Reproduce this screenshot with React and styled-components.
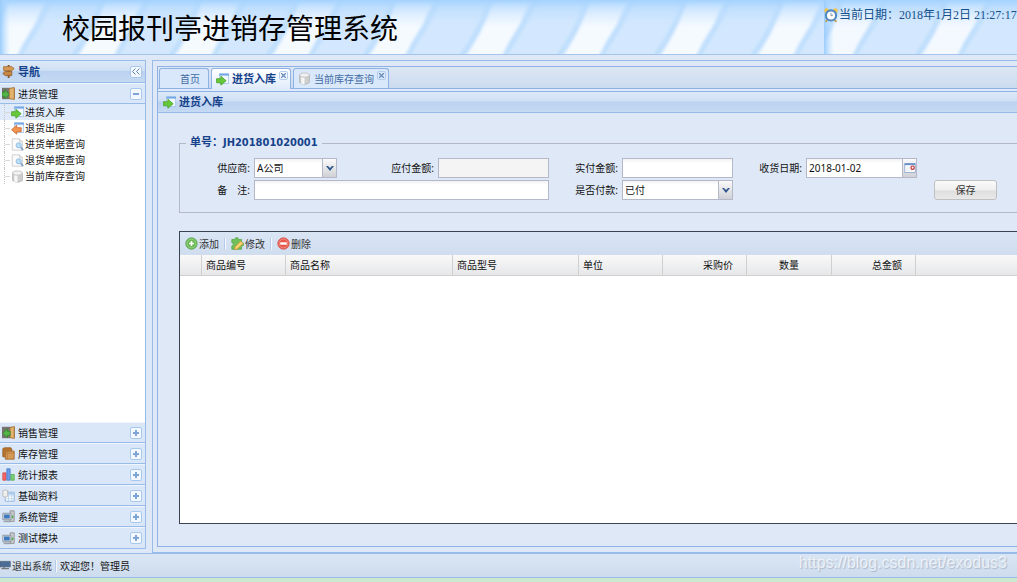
import { useState } from 'react';
import styled, { createGlobalStyle, css } from 'styled-components';

const menus = [
  { name: '销售管理', icon: 'doorOut' },
  { name: '库存管理', icon: 'box' },
  { name: '统计报表', icon: 'chart' },
  { name: '基础资料', icon: 'data' },
  { name: '系统管理', icon: 'computer' },
  { name: '测试模块', icon: 'computer' },
];

const treeItems = [
  { name: '进货入库', icon: 'goIn' },
  { name: '退货出库', icon: 'goOut' },
  { name: '进货单据查询', icon: 'search' },
  { name: '退货单据查询', icon: 'search' },
  { name: '当前库存查询', icon: 'db' },
];

const columns = [
  { name: '', width: 22 },
  { name: '商品编号', width: 84 },
  { name: '商品名称', width: 167 },
  { name: '商品型号', width: 126 },
  { name: '单位', width: 84 },
  { name: '采购价', width: 84, align: 'right' },
  { name: '数量', width: 85, align: 'center' },
  { name: '总金额', width: 84, align: 'right' },
];

const drawings = {
  sign: (
    <>
      <path d="M7 0h2.4v16H7z" fill="#8a5a2c" />
      <path d="M2 2h10l3 2.5L12 7H2z" fill="#d79a55" stroke="#a06a30" />
      <path d="M12 8H4l-3 2.5L4 13h8z" fill="#c88643" stroke="#935c27" />
    </>
  ),
  doorIn: (
    <>
      <path d="M0 1h16v14H0z" fill="#77746d" />
      <path d="M9 2l6-1.5v15L9 14z" fill="#e3b26c" stroke="#b07a38" />
      <path d="M0 6.5h3.5V3.5L9 9l-5.5 5.5v-3H0z" fill="#55b548" stroke="#2f8a2a" />
    </>
  ),
  doorOut: (
    <>
      <path d="M0 1h16v14H0z" fill="#77746d" />
      <path d="M10 2l5-1.5v15L10 14z" fill="#e3b26c" stroke="#b07a38" />
      <path d="M10 6.5H6.5V3.5L1 9l5.5 5.5v-3H10z" fill="#55b548" stroke="#2f8a2a" />
    </>
  ),
  box: (
    <>
      <path d="M1 2l2-1h8l1 2v9H1z" fill="#b9752f" stroke="#91591f" />
      <path d="M4 5h11v10H4z" fill="#d59a55" stroke="#a1662a" />
      <path d="M6.5 5v10M4 7.5h11" stroke="#b87a3a" />
    </>
  ),
  chart: (
    <>
      <path d="M1 6h4v9H1z" fill="#f36868" stroke="#d84848" />
      <path d="M6 1h4v14H6z" fill="#6c9de9" stroke="#4278cb" />
      <path d="M11 8h4v7h-4z" fill="#7ed078" stroke="#52ac52" />
    </>
  ),
  data: (
    <>
      <path d="M4 4h11v11H4z" fill="#fff" stroke="#80a8d5" />
      <path d="M4 6h11" stroke="#a6caf0" strokeWidth="2" />
      <path d="M4 8.5h11M4 12h11M8 6v9M12 6v9" stroke="#b6d2ee" />
      <path d="M1 2q3-2 6 0v7q-3 2-6 0z" fill="#eee" stroke="#b5b5b5" />
    </>
  ),
  computer: (
    <>
      <path d="M10 1h5v13h-5z" fill="#c9cbcd" stroke="#8b8b8b" />
      <path d="M1 4h10v8H1z" fill="#d9dde2" stroke="#838a94" />
      <path d="M2.5 5.5h7v5h-7z" fill="#3f79bd" />
      <path d="M2 14h9" stroke="#9aa0a8" strokeWidth="2" />
      <path d="M12 7h2v3h-2z" fill="#48ad48" />
    </>
  ),
  monitor: (
    <>
      <path d="M0 2h15v8H0z" fill="#4b6d97" stroke="#53606d" />
      <path d="M2 12.5h11M6 10v2" stroke="#777" strokeWidth="2" />
    </>
  ),
  goIn: (
    <>
      <path d="M4.5 1h11v12h-11z" fill="#f2f8ff" stroke="#9fc1ea" />
      <path d="M4 2h12" stroke="#78a9e6" strokeWidth="2.5" />
      <path d="M.7 7H6V4l6.5 5.5L6 15v-3H.7z" fill="#67c93a" stroke="#4aa32a" />
    </>
  ),
  goOut: (
    <>
      <path d="M4.5 1h11v12h-11z" fill="#f2f8ff" stroke="#9fc1ea" />
      <path d="M4 2h12" stroke="#78a9e6" strokeWidth="2.5" />
      <path d="M12.5 7H7V4L.7 9.5 7 15v-3h5.5z" fill="#f29550" stroke="#d0662a" />
    </>
  ),
  search: (
    <>
      <path d="M1.5 1h9L14 4.5V15H1.5z" fill="#fafafa" stroke="#c8c8c8" />
      <path d="M10.5 1v3.5H14" fill="none" stroke="#c8c8c8" />
      <circle cx="9.5" cy="9" r="3.2" fill="#b9dcf7" stroke="#8db8de" />
      <path d="M12 11.5l3 3.5" stroke="#7d9cc4" strokeWidth="2" />
    </>
  ),
  db: (
    <>
      <path d="M2 4v9q6 4 12 0V4z" fill="#cfcfcf" stroke="#b2b2b2" />
      <path d="M4 5v9.5l4 .7V5z" fill="#f7f7f7" />
      <ellipse cx="8" cy="3.8" rx="6" ry="2.6" fill="#f0f0f0" stroke="#bdbdbd" />
    </>
  ),
  add: (
    <>
      <circle cx="8" cy="8" r="7" fill="#67b852" stroke="#5ba34b" />
      <circle cx="8" cy="8" r="5.4" fill="none" stroke="#a5d894" />
      <path d="M8 5v6M5 8h6" stroke="#fff" strokeWidth="2" />
    </>
  ),
  edit: (
    <>
      <path
        d="M1 3h4q0-2.5 2-2.5T9 3h4v4q3 0 3 2t-3 2v4H1v-4q2 0 2-2T1 7z"
        fill="#6fc05a"
        stroke="#5aa64a"
      />
      <path d="M5 12l7-7 3 3-7.5 7-3 .7z" fill="#f7d36b" stroke="#c78f3a" />
    </>
  ),
  remove: (
    <>
      <circle cx="8" cy="8" r="7" fill="#e8564a" stroke="#d4534a" />
      <circle cx="8" cy="8" r="5.4" fill="none" stroke="#f29a90" />
      <path d="M4 8h8" stroke="#fff" strokeWidth="3" />
    </>
  ),
  clock: (
    <>
      <circle cx="3" cy="3" r="2.7" fill="#f4c44c" />
      <circle cx="13" cy="3" r="2.7" fill="#f4c44c" />
      <path d="M4 13l-2 3M12 13l2 3" stroke="#c89b45" strokeWidth="2" />
      <circle cx="8" cy="8.5" r="5.8" fill="#fff" stroke="#5189c0" strokeWidth="2.4" />
      <path d="M8 5.5V9l2.4-1" fill="none" stroke="#7a8794" />
    </>
  ),
  calendar: (
    <>
      <path d="M1 2h14v12H1z" fill="#fff" stroke="#7d9cc9" />
      <path d="M1 3h14" stroke="#6b93cb" strokeWidth="2.5" />
      <path d="M3 8h6M3 11h9" stroke="#c3cddb" strokeDasharray="2 1" />
      <circle cx="11.5" cy="7.5" r="2.2" fill="#fff" stroke="#c62d2d" strokeWidth="1.6" />
    </>
  ),
};

const Icon = ({ name, size = 13 }) => (
  <Svg width={size} height={size} viewBox="0 0 16 16" aria-hidden="true">
    {drawings[name]}
  </Svg>
);

const Stripes = ({ id, period, offset, white }) => (
  <StripesSvg aria-hidden="true">
    <defs>
      <linearGradient id={`${id}-top`} x1="0" y1="0" x2="0" y2="1">
        <stop offset="0" stopColor="#a3d2fe" />
        <stop offset="0.3" stopColor="#b3d9fe" stopOpacity="0.6" />
        <stop offset="1" stopColor="#cfe6ff" stopOpacity="0" />
      </linearGradient>
      <linearGradient id={`${id}-left`}>
        <stop offset="0" stopColor="#9acdfc" />
        <stop offset="1" stopColor="#b8dcff" stopOpacity="0" />
      </linearGradient>
      <filter id={`${id}-soft`}>
        <feGaussianBlur stdDeviation="1.6" />
      </filter>
      <pattern
        id={id}
        x={offset}
        width={period}
        height="56"
        patternUnits="userSpaceOnUse"
      >
        <rect width={period} height="56" fill="#d3e8fe" />
        <g filter={`url(#${id}-soft)`}>
          <path d="M4 58L34 -2H74L42 58z" fill={white} />
          <path d="M-3 58L8 42L16 28L24 10L29 -2H35L27 18L20 33L10 50L4 58z" fill="#c0dffd" />
          <path d="M41 58L49 42L60 24L65 12L73 -2H79L70 18L63 30L53 46L46 58z" fill="#c0dffd" />
        </g>
      </pattern>
    </defs>
    <rect width="100%" height="100%" fill={`url(#${id})`} />
    <rect width="100%" height="28" fill={`url(#${id}-top)`} />
    <rect width="10" height="100%" fill={`url(#${id}-left)`} />
  </StripesSvg>
);

const Arrow = () => (
  <svg width="8" height="6" viewBox="0 0 8 6" aria-hidden="true">
    <path d="M0 1h2l2 2 2-2h2L4 6z" fill="#2f568f" />
  </svg>
);

const App = () => {
  const [supplier, setSupplier] = useState('A公司');
  const [paid, setPaid] = useState('已付');

  return (
    <Page>
      <GlobalStyle />
      <Header>
        <Stripes id="banner" period="97" offset="72" white="#f5faff" />
        <Title>校园报刊亭进销存管理系统</Title>
        <Today>
          <Stripes id="today" period="105" offset="91" white="#f4f9ff" />
          <TodayText>
            <Icon name="clock" size={14} />
            <span>当前日期：2018年1月2日&nbsp;21:27:17</span>
          </TodayText>
        </Today>
      </Header>

      <Main>
        <Sidebar>
          <SideHead>
            <Icon name="sign" />
            <SideTitle>导航</SideTitle>
            <Tool aria-label="收起导航">
              <svg width="8" height="7" viewBox="0 0 8 7">
                <path
                  d="M3.5 .5l-3 3 3 3M7.5 .5l-3 3 3 3"
                  fill="none"
                  stroke="#5d83b8"
                />
              </svg>
            </Tool>
          </SideHead>
          <MenuHead>
            <Icon name="doorIn" />
            <span>进货管理</span>
            <Tool aria-label="折叠">
              <svg width="6" height="6" viewBox="0 0 6 6">
                <path d="M0 3h6" stroke="#7fa5d6" strokeWidth="2" />
              </svg>
            </Tool>
          </MenuHead>
          <Tree>
            {treeItems.map((item, i) => (
              <TreeItem key={item.name} $active={i === 0}>
                <Branch />
                <TreeLink href="#">
                  <Icon name={item.icon} />
                  {item.name}
                </TreeLink>
              </TreeItem>
            ))}
          </Tree>
          {menus.map((menu) => (
            <MenuHead key={menu.name}>
              <Icon name={menu.icon} />
              <span>{menu.name}</span>
              <Tool aria-label="展开">
                <svg width="6" height="6" viewBox="0 0 6 6">
                  <path d="M0 3h6M3 0v6" stroke="#7fa5d6" strokeWidth="2" />
                </svg>
              </Tool>
            </MenuHead>
          ))}
        </Sidebar>

        <Content>
          <TabPanel>
            <Tabs>
              <Tab $home>
                <TabLabel>首页</TabLabel>
              </Tab>
              <Tab $active>
                <Icon name="goIn" />
                <TabLabel $active>进货入库</TabLabel>
                <Close />
              </Tab>
              <Tab>
                <Icon name="db" />
                <TabLabel>当前库存查询</TabLabel>
                <Close />
              </Tab>
            </Tabs>
            <TabLine />
            <PanelHead>
              <Icon name="goIn" />
              进货入库
            </PanelHead>
            <PanelBody>
              <Fieldset>
                <Legend>单号：JH201801020001</Legend>
                <Form>
                  <Field>
                    <Label htmlFor="supplier">供应商:</Label>
                    <Combo $short>
                      <Select
                        id="supplier"
                        value={supplier}
                        onChange={(e) => setSupplier(e.target.value)}
                      >
                        <option>A公司</option>
                      </Select>
                      <Trigger>
                        <Arrow />
                      </Trigger>
                    </Combo>
                  </Field>
                  <Field>
                    <Label htmlFor="payable">应付金额:</Label>
                    <Input id="payable" readOnly />
                  </Field>
                  <Field>
                    <Label htmlFor="payment">实付金额:</Label>
                    <Input id="payment" />
                  </Field>
                  <Field>
                    <Label htmlFor="date">收货日期:</Label>
                    <Combo>
                      <Input id="date" defaultValue="2018-01-02" />
                      <Trigger>
                        <Icon name="calendar" size={12} />
                      </Trigger>
                    </Combo>
                  </Field>
                  <Field $wide>
                    <Label htmlFor="remarks">备&emsp;注:</Label>
                    <Input id="remarks" />
                  </Field>
                  <Field>
                    <Label htmlFor="paid">是否付款:</Label>
                    <Combo>
                      <Select
                        id="paid"
                        value={paid}
                        onChange={(e) => setPaid(e.target.value)}
                      >
                        <option>已付</option>
                        <option>未付</option>
                      </Select>
                      <Trigger>
                        <Arrow />
                      </Trigger>
                    </Combo>
                  </Field>
                  <Save type="button">保存</Save>
                </Form>
              </Fieldset>

              <Grid>
                <Toolbar>
                  <ToolButton>
                    <Icon name="add" />
                    添加
                  </ToolButton>
                  <Separator />
                  <ToolButton>
                    <Icon name="edit" />
                    修改
                  </ToolButton>
                  <Separator />
                  <ToolButton>
                    <Icon name="remove" />
                    删除
                  </ToolButton>
                </Toolbar>
                <Table>
                  <colgroup>
                    {columns.map((column, i) => (
                      <Col key={i} $width={column.width} />
                    ))}
                    <col />
                  </colgroup>
                  <thead>
                    <tr>
                      {columns.map((column, i) => (
                        <Th key={i} $align={column.align}>
                          {column.name}
                        </Th>
                      ))}
                      <Th $last />
                    </tr>
                  </thead>
                </Table>
              </Grid>
            </PanelBody>
          </TabPanel>
        </Content>
      </Main>

      <StatusBar>
        <ToolButton>
          <Icon name="monitor" size={11} />
          退出系统
        </ToolButton>
        <Separator />
        <span>欢迎您！管理员</span>
      </StatusBar>
      <Footer />
      <Watermark>https://blog.csdn.net/exodus3</Watermark>
    </Page>
  );
};

const Close = () => (
  <CloseButton aria-label="关闭">
    <svg width="5" height="5" viewBox="0 0 5 5">
      <path d="M0 0l5 5M5 0L0 5" stroke="#6d8fbd" strokeWidth="1.4" />
    </svg>
  </CloseButton>
);

const GlobalStyle = createGlobalStyle`
  * {
    box-sizing: border-box;
  }
  body {
    margin: 0;
    overflow: hidden;
    background: #dfe8f6;
  }
  body, button, input, select {
    font-family: 'Noto Sans', 'Noto Sans CJK SC', sans-serif;
    font-size: 10px;
    line-height: 14px;
    color: #111;
  }
  button {
    padding: 0;
    border: 0;
    background: none;
  }
`;

const Page = styled.div`
  position: relative;
  display: flex;
  flex-direction: column;
  height: 100vh;
  white-space: nowrap;
`;
const Svg = styled.svg`
  display: block;
  flex: none;
`;
const StripesSvg = styled.svg`
  position: absolute;
  inset: 0;
  width: 100%;
  height: 100%;
`;
const Header = styled.header`
  position: relative;
  display: flex;
  justify-content: space-between;
  flex: none;
  height: 55px;
  border-bottom: 1px solid #a5c4ec;
`;
const Title = styled.h1`
  position: relative;
  margin: 0;
  padding: 8px 0 0 62px;
  font-size: 28px;
  font-weight: 400;
  line-height: 40px;
  color: #000;
`;
const Today = styled.div`
  position: relative;
  width: 193px;
`;
const TodayText = styled.div`
  position: relative;
  display: flex;
  align-items: center;
  gap: 1px;
  padding-top: 6px;
  font-family: 'Liberation Serif', 'Noto Sans CJK SC', serif;
  font-size: 12px;
  line-height: 18px;
  color: #15518a;
`;

const Main = styled.div`
  display: flex;
  flex: 1;
  min-height: 0;
  padding-top: 5px;
`;

const bar = css`
  background: linear-gradient(
    #dce9f8,
    #d0e0f4 45%,
    #bbd2f0 50%,
    #c5d9f3
  );
`;
const Sidebar = styled.nav`
  display: flex;
  flex-direction: column;
  flex: none;
  width: 146px;
  margin-bottom: 4px;
  border: 1px solid #99bbe8;
  border-left: 0;
`;
const SideHead = styled.div`
  display: flex;
  align-items: center;
  flex: none;
  gap: 3px;
  height: 22px;
  padding: 0 3px 0 2px;
  border-bottom: 1px solid #99bbe8;
  ${bar}
`;
const SideTitle = styled.strong`
  font-size: 11px;
  color: #15428b;
`;
const Tool = styled.button`
  display: flex;
  align-items: center;
  justify-content: center;
  width: 12px;
  height: 12px;
  margin-left: auto;
  border: 1px solid #a9c8ee;
  border-radius: 2px;
  background: #f3f8ff;
`;
const MenuHead = styled.div`
  display: flex;
  align-items: center;
  flex: none;
  gap: 3px;
  height: 21px;
  padding: 0 3px 0 2px;
  border-top: 1px solid #eef5fd;
  border-bottom: 1px solid #99bbe8;
  background: #d9e7f8;

  &:last-child {
    border-bottom: 0;
  }
`;
const Tree = styled.ul`
  flex: 1;
  min-height: 0;
  margin: 0;
  padding: 0;
  list-style: none;
  background: #fff;
`;
const TreeItem = styled.li`
  display: flex;
  align-items: center;
  height: 16px;
  padding-left: 4px;
  background: ${({ $active }) => ($active ? '#dfebfa' : 'none')};
`;
const Branch = styled.i`
  align-self: stretch;
  width: 7px;
  border-left: 1px dotted #c8c8c8;
  background: linear-gradient(#d8d8d8, #d8d8d8) 0 8px / 5px 1px no-repeat;
`;
const TreeLink = styled.a`
  display: flex;
  align-items: center;
  gap: 1px;
  color: #111;
  text-decoration: none;
`;

const Content = styled.main`
  flex: 1;
  min-width: 0;
  margin-left: 6px;
  padding: 5px 0 5px 4px;
  border: 1px solid #99bbe8;
  border-right: 0;
`;
const TabPanel = styled.section`
  display: flex;
  flex-direction: column;
  height: 100%;
  border: 1px solid #8db2e3;
  border-right: 0;
`;
const Tabs = styled.div`
  display: flex;
  flex: none;
  gap: 2px;
  height: 22px;
  padding: 1px 0 0 1px;
  border-bottom: 1px solid #8db2e3;
  background: linear-gradient(#dde7f4, #cbdbef);
`;
const Tab = styled.div`
  display: flex;
  align-items: center;
  gap: 3px;
  height: ${({ $active }) => ($active ? 21 : 20)}px;
  padding: 0 2px 0 4px;
  ${({ $home }) => $home && 'padding: 0 8px 0 20px;'}
  border: 1px solid #8db2e3;
  border-bottom: 0;
  border-radius: 3px 3px 0 0;
  background: ${({ $active }) =>
    $active ? 'linear-gradient(#fff, #dfebfb)' : '#d9e8fb'};
`;
const TabLabel = styled.span`
  font-size: ${({ $active }) => ($active ? 11 : 10)}px;
  font-weight: ${({ $active }) => ($active ? 700 : 400)};
  color: ${({ $active }) => ($active ? '#15428b' : '#416aa3')};
`;
const CloseButton = styled.button`
  display: flex;
  align-items: center;
  justify-content: center;
  align-self: flex-start;
  width: 9px;
  height: 9px;
  margin-top: 2px;
  border: 1px solid #b5cdec;
  border-radius: 2px;
`;
const TabLine = styled.div`
  flex: none;
  height: 3px;
  border-bottom: 1px solid #8db2e3;
  background: #dfebfb;
`;
const PanelHead = styled.h2`
  display: flex;
  align-items: center;
  flex: none;
  gap: 3px;
  height: 21px;
  margin: 0;
  padding-left: 5px;
  border-bottom: 1px solid #99bbe8;
  font-size: 11px;
  color: #15428b;
  ${bar}
`;
const PanelBody = styled.div`
  display: flex;
  flex-direction: column;
  flex: 1;
  min-height: 0;
  padding: 23px 0 22px 21px;
`;
const Fieldset = styled.fieldset`
  flex: none;
  min-width: 0;
  height: 77px;
  margin: 0 0 18px;
  padding: 8px 0 0 4px;
  border: 1px solid #b5b8c8;
  border-right: 0;
`;
const Legend = styled.legend`
  margin-left: 2px;
  padding: 0 4px;
  font-family: 'DejaVu Sans Condensed', 'Noto Sans CJK SC', sans-serif;
  font-size: 11px;
  font-weight: 700;
  color: #15428b;
`;
const Form = styled.form`
  display: grid;
  grid-template-columns: repeat(4, 184px) auto;
  grid-auto-rows: 20px;
  row-gap: 2px;
  justify-content: start;
`;
const Field = styled.div`
  display: flex;
  align-items: center;
  gap: 4px;
  padding-right: 3px;
  ${({ $wide }) => $wide && 'grid-column: span 2;'}
`;
const Label = styled.label`
  flex: none;
  width: 66px;
  text-align: right;
`;
const Input = styled.input`
  width: 100%;
  min-width: 0;
  height: 20px;
  padding: 0 2px;
  border: 1px solid #b5b8c8;
  border-radius: 0;
  background: linear-gradient(#f1f2f4, #fff 4px);

  &:read-only {
    background: #f4f4f4;
  }
`;
const Combo = styled.div`
  position: relative;
  width: ${({ $short }) => ($short ? '83px' : '100%')};
`;
const Select = styled.select`
  display: block;
  width: 100%;
  height: 20px;
  padding: 0 2px;
  appearance: none;
  border: 1px solid #b5b8c8;
  border-radius: 0;
  background: linear-gradient(#f1f2f4, #fff 4px);
`;
const Trigger = styled.span`
  position: absolute;
  top: 0;
  right: 0;
  display: flex;
  align-items: center;
  justify-content: center;
  width: 15px;
  height: 20px;
  border: 1px solid #b5b8c8;
  background: linear-gradient(#fafafa, #e6e6e8 50%, #cfd1d6);
  pointer-events: none;
`;
const Save = styled.button`
  grid-column: 5;
  width: 63px;
  height: 20px;
  margin-left: 14px;
  border: 1px solid #bfc0c4;
  border-radius: 3px;
  background: linear-gradient(#fafafa, #efefef 50%, #dedede 55%, #e9e9e9);
  color: #333;
`;

const Grid = styled.section`
  flex: 1;
  min-height: 0;
  border: 1px solid #3b4450;
  border-right: 0;
  background: #fff;
`;
const Toolbar = styled.div`
  display: flex;
  align-items: center;
  gap: 5px;
  height: 23px;
  padding-left: 5px;
  background: linear-gradient(#dae5f4, #cfddef);
`;
const ToolButton = styled.button`
  display: flex;
  align-items: center;
  gap: 1px;
  color: #333;
`;
const Separator = styled.i`
  width: 2px;
  height: 12px;
  border-left: 1px solid #b5cbe8;
  border-right: 1px solid #f5f9fe;
`;
const Table = styled.table`
  width: 100%;
  table-layout: fixed;
  border-collapse: separate;
  border-spacing: 0;
`;
const Col = styled.col`
  width: ${({ $width }) => $width}px;
`;
const Th = styled.th`
  height: 21px;
  padding: 0 13px 0 4px;
  ${({ $align }) => $align === 'center' && 'padding: 0;'}
  border-right: ${({ $last }) => ($last ? 0 : '1px solid #d0d0d0')};
  border-bottom: 1px solid #d0d0d0;
  background: linear-gradient(#f9f9f9, #e6e7e9);
  font-weight: 400;
  text-align: ${({ $align }) => $align || 'left'};
`;

const StatusBar = styled.footer`
  display: flex;
  align-items: center;
  flex: none;
  gap: 3px;
  height: 25px;
  border-top: 1px solid #99bbe8;
  border-bottom: 1px solid #99bbe8;
  background: linear-gradient(#dae6f4, #cddcee);
`;
const Footer = styled.div`
  flex: none;
  height: 4px;
  background: #cce8cf;
`;
const Watermark = styled.div`
  position: absolute;
  right: 10px;
  bottom: 9px;
  font-family: 'Liberation Sans', sans-serif;
  font-size: 16px;
  line-height: 20px;
  color: rgba(255, 255, 255, 0.7);
  text-shadow: 1px 1px 1px rgba(130, 145, 170, 0.5);
`;

export default App;
